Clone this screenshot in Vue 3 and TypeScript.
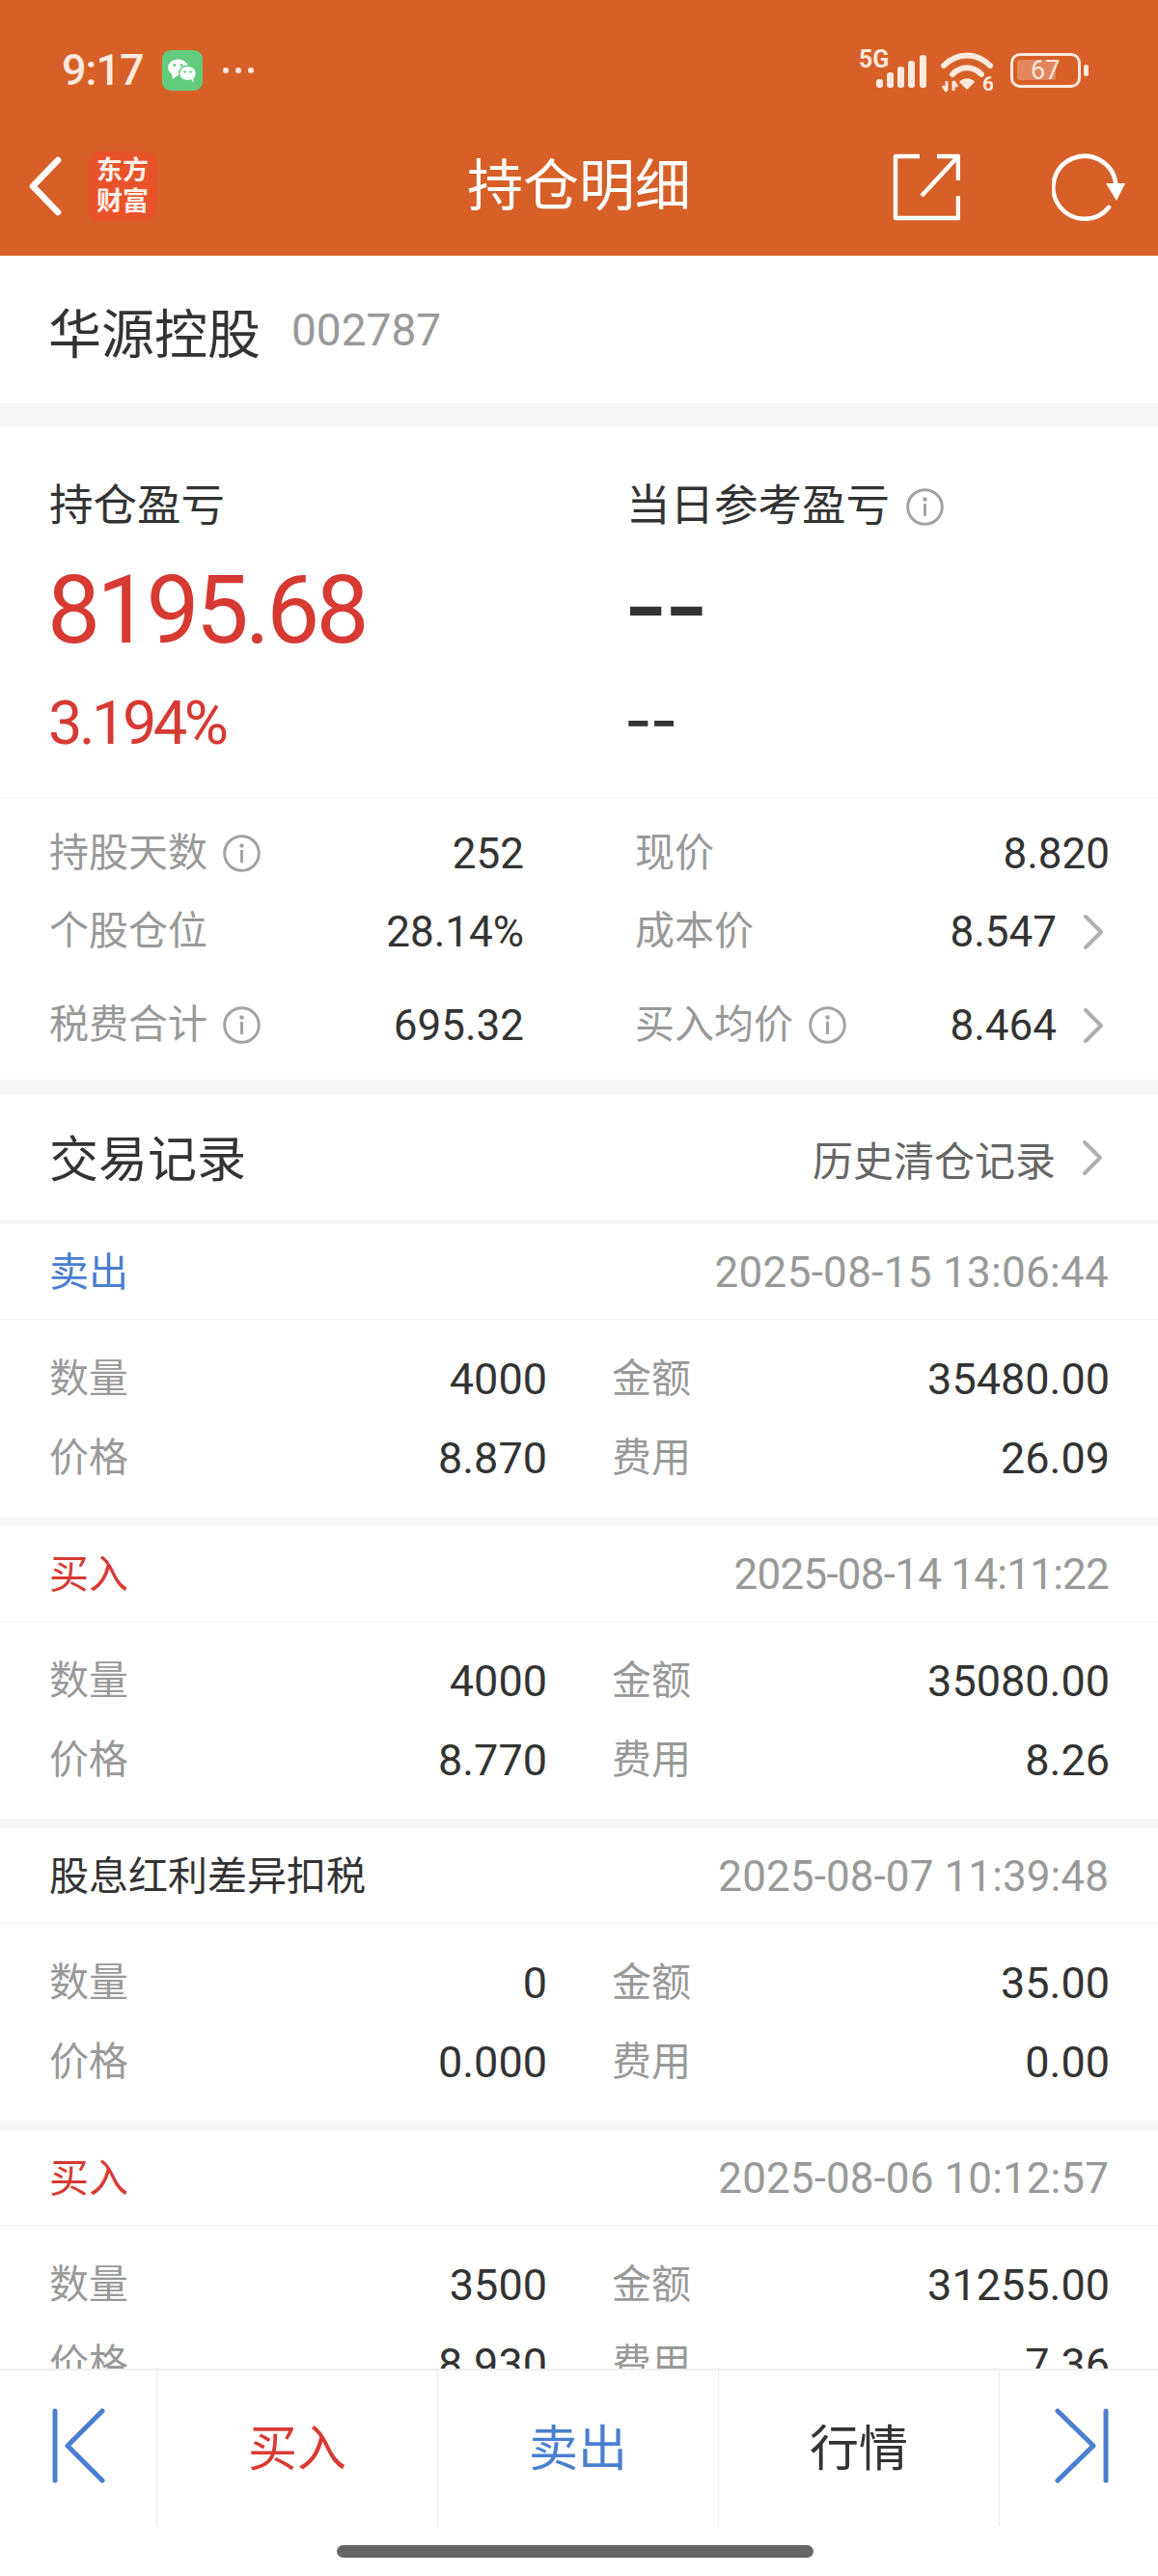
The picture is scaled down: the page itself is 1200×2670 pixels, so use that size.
<script setup lang="ts">
interface TradeRecord {
  type: string
  tone: string
  time: string
  spacing: number
  qty: string
  amount: string
  price: string
  fee: string
}

const records: TradeRecord[] = [
  { type: '卖出', tone: 'blue', time: '2025-08-15 13:06:44', spacing: 0.3, qty: '4000', amount: '35480.00', price: '8.870', fee: '26.09' },
  { type: '买入', tone: 'red', time: '2025-08-14 14:11:22', spacing: -0.75, qty: '4000', amount: '35080.00', price: '8.770', fee: '8.26' },
  { type: '股息红利差异扣税', tone: 'dark', time: '2025-08-07 11:39:48', spacing: 0.1, qty: '0', amount: '35.00', price: '0.000', fee: '0.00' },
  { type: '买入', tone: 'red', time: '2025-08-06 10:12:57', spacing: 0.1, qty: '3500', amount: '31255.00', price: '8.930', fee: '7.36' },
]
</script>

<template>
  <div class="page">
    <header class="header">
      <div class="status">
        <div class="status-left">
          <span class="clock">9:17</span>
          <svg class="wechat" width="42" height="42" viewBox="0 0 42 42">
            <rect width="42" height="42" rx="9" fill="#62cc7c" />
            <ellipse cx="16.5" cy="18" rx="10.5" ry="8.5" fill="#fff" />
            <path d="M10 24l1 6 5-4z" fill="#fff" />
            <ellipse cx="26.5" cy="24" rx="9" ry="7.8" fill="#fff" stroke="#62cc7c" stroke-width="1.5" />
            <path d="M30 30l3 4-.5-5z" fill="#fff" />
            <circle cx="13" cy="15.5" r="1.5" fill="#62cc7c" />
            <circle cx="20" cy="15.5" r="1.5" fill="#62cc7c" />
            <circle cx="23.5" cy="22.5" r="1.3" fill="#62cc7c" />
            <circle cx="29.5" cy="22.5" r="1.3" fill="#62cc7c" />
          </svg>
          <span class="dots"><i></i><i></i><i></i></span>
        </div>
        <div class="status-right">
          <span class="net">5G</span>
          <svg class="signal" width="52" height="34" viewBox="0 0 52 34">
            <rect x="0" y="25" width="7" height="9" rx="3" fill="#fde9dd" />
            <rect x="11" y="18" width="7" height="16" rx="3" fill="#fde9dd" />
            <rect x="22" y="12" width="7" height="22" rx="3" fill="#fde9dd" />
            <rect x="33" y="6" width="7" height="28" rx="3" fill="#fde9dd" />
            <rect x="45" y="0" width="7" height="34" rx="3" fill="#fde9dd" />
          </svg>
          <svg class="wifi" width="54" height="42" viewBox="0 0 54 42">
            <path d="M3 14C17 0 37 0 51 14" fill="none" stroke="#fde9dd" stroke-width="6" stroke-linecap="round" />
            <path d="M12 23C21 14 33 14 42 23" fill="none" stroke="#fde9dd" stroke-width="6" stroke-linecap="round" />
            <path d="M19 31C23 26 31 26 35 31L27 39Z" fill="#fde9dd" />
            <path d="M6 30v10M2 35l4 6M13 40V30M13 30l4 6" fill="none" stroke="#fde9dd" stroke-width="3" />
            <text x="43" y="40" class="wifi-six">6</text>
          </svg>
          <span class="battery"><span class="battery-fill"></span><span class="battery-num">67</span></span>
          <span class="battery-nub"></span>
        </div>
      </div>
      <div class="nav">
        <div class="nav-left">
          <svg class="back" width="36" height="62" viewBox="0 0 36 62">
            <path d="M30 4L4 31l26 27" fill="none" stroke="#fff" stroke-width="6.5" stroke-linecap="round" stroke-linejoin="round" />
          </svg>
          <div class="logo"><span>东方</span><span>财富</span></div>
        </div>
        <h1 class="nav-title">持仓明细</h1>
        <div class="nav-right">
          <svg width="70" height="70" viewBox="0 0 70 70">
            <path d="M28 3H3v64h65V44M68 28V3H46M68 3L30 44" fill="none" stroke="#fff" stroke-width="4.5" stroke-linejoin="round" />
          </svg>
          <svg width="76" height="70" viewBox="0 0 76 70">
            <path d="M59 56A32.5 32.5 0 1 1 66 30" fill="none" stroke="#fff" stroke-width="4.5" stroke-linecap="round" />
            <path d="M56 31H76L67 49Z" fill="#fff" />
          </svg>
        </div>
      </div>
    </header>

    <main class="scroller">
      <section class="name-row">
        <span class="stock-name">华源控股</span>
        <span class="stock-code">002787</span>
      </section>

      <section class="summary">
        <div class="summary-col">
          <div class="summary-title">持仓盈亏</div>
          <div class="big red">8195.68</div>
          <div class="pct red">3.194%</div>
        </div>
        <div class="summary-col">
          <div class="summary-title">当日参考盈亏
            <svg class="info" width="39" height="39" viewBox="0 0 39 39">
              <circle cx="19.5" cy="19.5" r="17.8" fill="none" stroke="#a3a3a3" stroke-width="3" />
              <circle cx="19.5" cy="11.5" r="2.2" fill="#a3a3a3" />
              <rect x="18" y="16" width="3" height="13" fill="#a3a3a3" />
            </svg>
          </div>
          <div class="big dash">--</div>
          <div class="pct dash-small">--</div>
        </div>
      </section>

      <section class="stats">
        <div class="stat-row first">
          <div class="stat">
            <span class="stat-label">持股天数
              <svg class="info" width="39" height="39" viewBox="0 0 39 39">
                <circle cx="19.5" cy="19.5" r="17.8" fill="none" stroke="#a3a3a3" stroke-width="3" />
                <circle cx="19.5" cy="11.5" r="2.2" fill="#a3a3a3" />
                <rect x="18" y="16" width="3" height="13" fill="#a3a3a3" />
              </svg>
            </span>
            <span class="stat-value">252</span>
          </div>
          <div class="stat">
            <span class="stat-label">现价</span>
            <span class="stat-value">8.820</span>
          </div>
        </div>
        <div class="stat-row second">
          <div class="stat">
            <span class="stat-label">个股仓位</span>
            <span class="stat-value">28.14%</span>
          </div>
          <div class="stat">
            <span class="stat-label">成本价</span>
            <span class="stat-value">8.547
              <svg class="chev" width="27" height="36" viewBox="0 0 27 36">
                <path d="M2 2l16 16L2 34" fill="none" stroke="#b0b0b0" stroke-width="4" stroke-linecap="round" stroke-linejoin="round" />
              </svg>
            </span>
          </div>
        </div>
        <div class="stat-row third">
          <div class="stat">
            <span class="stat-label">税费合计
              <svg class="info" width="39" height="39" viewBox="0 0 39 39">
                <circle cx="19.5" cy="19.5" r="17.8" fill="none" stroke="#a3a3a3" stroke-width="3" />
                <circle cx="19.5" cy="11.5" r="2.2" fill="#a3a3a3" />
                <rect x="18" y="16" width="3" height="13" fill="#a3a3a3" />
              </svg>
            </span>
            <span class="stat-value">695.32</span>
          </div>
          <div class="stat">
            <span class="stat-label">买入均价
              <svg class="info" width="39" height="39" viewBox="0 0 39 39">
                <circle cx="19.5" cy="19.5" r="17.8" fill="none" stroke="#a3a3a3" stroke-width="3" />
                <circle cx="19.5" cy="11.5" r="2.2" fill="#a3a3a3" />
                <rect x="18" y="16" width="3" height="13" fill="#a3a3a3" />
              </svg>
            </span>
            <span class="stat-value">8.464
              <svg class="chev" width="27" height="36" viewBox="0 0 27 36">
                <path d="M2 2l16 16L2 34" fill="none" stroke="#b0b0b0" stroke-width="4" stroke-linecap="round" stroke-linejoin="round" />
              </svg>
            </span>
          </div>
        </div>
      </section>

      <section class="trades-head">
        <span class="trades-title">交易记录</span>
        <span class="trades-link">历史清仓记录
          <svg class="chev" width="27" height="36" viewBox="0 0 27 36">
            <path d="M2 2l16 16L2 34" fill="none" stroke="#b0b0b0" stroke-width="4" stroke-linecap="round" stroke-linejoin="round" />
          </svg>
        </span>
      </section>

      <article v-for="r in records" :key="r.time" class="record">
        <div class="record-head">
          <span class="record-type" :class="r.tone">{{ r.type }}</span>
          <span class="record-time" :style="{ letterSpacing: r.spacing + 'px' }">{{ r.time }}</span>
        </div>
        <div class="record-body">
          <div class="cell"><span class="cell-label">数量</span><span class="cell-value">{{ r.qty }}</span></div>
          <div class="cell"><span class="cell-label">金额</span><span class="cell-value">{{ r.amount }}</span></div>
          <div class="cell"><span class="cell-label">价格</span><span class="cell-value">{{ r.price }}</span></div>
          <div class="cell"><span class="cell-label">费用</span><span class="cell-value">{{ r.fee }}</span></div>
        </div>
      </article>
    </main>

    <nav class="bottom">
      <div class="bottom-icon">
        <svg width="56" height="78" viewBox="0 0 56 78">
          <path d="M3 3v72M52 3L16 39l36 36" fill="none" stroke="#4a7fd0" stroke-width="5" stroke-linecap="round" stroke-linejoin="round" />
        </svg>
      </div>
      <div class="bottom-btn red">买入</div>
      <div class="bottom-btn blue">卖出</div>
      <div class="bottom-btn dark">行情</div>
      <div class="bottom-icon last">
        <svg width="56" height="78" viewBox="0 0 56 78">
          <path d="M53 3v72M3 3l37 36L3 75" fill="none" stroke="#4a7fd0" stroke-width="5" stroke-linecap="round" stroke-linejoin="round" />
        </svg>
      </div>
    </nav>
    <div class="home-area"><span class="home-bar"></span></div>
  </div>
</template>

<style scoped>
.page {
  width: 1200px;
  height: 2670px;
  display: flex;
  flex-direction: column;
  overflow: hidden;
  background: #fff;
  color: #333;
  font-family: Roboto, "Noto Sans CJK SC", sans-serif;
}

.header {
  height: 265px;
  flex: none;
  background: #d66028;
  color: #fff;
}
.status {
  height: 112px;
  padding: 52px 72px 0 64px;
  box-sizing: border-box;
  display: flex;
  justify-content: space-between;
}
.status-left {
  height: 42px;
  display: flex;
  align-items: center;
}
.clock {
  font-size: 45px;
  line-height: 42px;
  font-weight: 500;
  width: 104px;
  color: #fde9dd;
  letter-spacing: -1px;
}
.dots {
  display: flex;
  gap: 7px;
  margin-left: 21px;
}
.dots i {
  width: 6px;
  height: 6px;
  border-radius: 50%;
  background: #fde9dd;
}
.status-right {
  position: relative;
  height: 44px;
  display: flex;
  align-items: flex-start;
}
.net {
  font-size: 25px;
  line-height: 20px;
  font-weight: 700;
  color: #fde9dd;
  width: 18px;
  white-space: nowrap;
}
.signal {
  margin-top: 5px;
}
.wifi {
  margin-left: 15px;
  margin-top: 2px;
}
.wifi-six {
  font-size: 21px;
  font-weight: 700;
  fill: #fde9dd;
}
.battery {
  position: relative;
  width: 73px;
  height: 36px;
  margin: 3px 0 0 18px;
  box-sizing: border-box;
  border: 3px solid #fde9dd;
  border-radius: 10px;
}
.battery-fill {
  position: absolute;
  left: 4px;
  top: 4px;
  width: 40px;
  height: 21px;
  border-radius: 3px;
  background: #e5855b;
}
.battery-num {
  position: absolute;
  left: 18px;
  top: 1px;
  font-size: 27px;
  line-height: 28px;
  color: #fde9dd;
}
.battery-nub {
  width: 5px;
  height: 12px;
  margin: 15px 0 0 3px;
  border-radius: 3px;
  background: #fde9dd;
}
.nav {
  position: relative;
  height: 153px;
  padding: 0 34px 0 30px;
  display: flex;
  justify-content: space-between;
}
.nav-left {
  display: flex;
  align-items: flex-start;
}
.back {
  margin-top: 50px;
  flex: none;
}
.logo {
  width: 72px;
  height: 72px;
  margin: 45px 0 0 25px;
  border-radius: 12px;
  background: #e8532b;
  display: flex;
  flex-direction: column;
  align-items: center;
  justify-content: center;
  font-size: 27px;
  line-height: 32px;
  font-weight: 700;
  color: #fff1e9;
}
.nav-title {
  position: absolute;
  left: 0;
  right: 0;
  top: 43px;
  margin: 0;
  text-align: center;
  font-size: 58px;
  line-height: 76px;
  font-weight: 400;
}
.nav-right {
  display: flex;
  align-items: flex-start;
  gap: 95px;
  padding-top: 47px;
}

.scroller {
  flex: 1;
  min-height: 0;
  overflow: hidden;
  background: #f6f7f9;
}
.name-row {
  height: 153px;
  padding-left: 50px;
  display: flex;
  align-items: center;
  background: #fff;
  margin-bottom: 25px;
}
.stock-name {
  font-size: 55px;
  color: #333;
}
.stock-code {
  margin-left: 32px;
  font-size: 46px;
  color: #999;
}

.summary {
  height: 384px;
  box-sizing: border-box;
  padding: 60px 0 0 51px;
  display: grid;
  grid-template-columns: 598px 1fr;
  background: #fff;
  border-bottom: 1px solid #f3f3f3;
}
.summary-title {
  display: flex;
  align-items: center;
  font-size: 45.5px;
  line-height: 44px;
  color: #333;
}
.summary-title .info {
  margin-left: 17px;
}
.big {
  margin-top: 36px;
  font-size: 98px;
  line-height: 100px;
  letter-spacing: -3.8px;
  margin-left: -2px;
}
.pct {
  margin-top: 37px;
  font-size: 63px;
  line-height: 60px;
  letter-spacing: -3.5px;
  margin-left: -1px;
}
.red {
  color: #d63a33;
}
.blue {
  color: #4a7fd0;
}
.dark {
  color: #333;
}
.big.dash {
  font-family: Inter, sans-serif;
  font-size: 100px;
  line-height: 90px;
  letter-spacing: -4px;
  color: #333;
  font-weight: 500;
  margin-left: -3px;
  margin-bottom: 10px;
}
.pct.dash-small {
  font-family: Inter, sans-serif;
  font-size: 62px;
  line-height: 50px;
  letter-spacing: -2px;
  color: #333;
  font-weight: 500;
  margin-top: 49px;
  margin-left: -2px;
}

.stats {
  height: 292px;
  box-sizing: border-box;
  padding: 33px 50px 0 51px;
  background: #fff;
  margin-bottom: 16px;
}
.stat-row {
  display: grid;
  grid-template-columns: 492px 492px;
  grid-template-rows: 48px;
  gap: 115px;
  height: 48px;
}
.second {
  margin-top: 33px;
}
.third {
  margin-top: 49px;
}
.stat {
  display: flex;
  justify-content: space-between;
  align-items: center;
}
.stat-label {
  display: flex;
  align-items: center;
  font-size: 41px;
  line-height: 48px;
  color: #999;
}
.stat-label .info {
  margin-left: 16px;
}
.stat-value {
  display: flex;
  align-items: center;
  padding-top: 2px;
  font-size: 44px;
  line-height: 46px;
  color: #333;
}
.chev {
  margin-left: 28px;
  flex: none;
}

.trades-head {
  height: 130px;
  box-sizing: border-box;
  padding: 0 51px;
  display: flex;
  justify-content: space-between;
  align-items: center;
  background: #fff;
  margin-bottom: 4px;
}
.trades-title {
  font-size: 51px;
  line-height: 60px;
  margin-top: 6px;
  color: #333;
}
.trades-link {
  display: flex;
  align-items: center;
  font-size: 42px;
  color: #666;
}

.record {
  height: 303px;
  margin-bottom: 10px;
  background: #fff;
}
.record-head {
  height: 99px;
  box-sizing: border-box;
  padding: 0 51px;
  display: flex;
  justify-content: space-between;
  align-items: center;
  border-bottom: 1px solid #f3f3f3;
}
.record-type {
  font-size: 41px;
  line-height: 50px;
  padding-top: 2px;
}
.record-time {
  font-size: 44px;
  line-height: 50px;
  padding-top: 2px;
  color: #999;
}
.record-body {
  padding: 37px 50px 0 51px;
  display: grid;
  grid-template-columns: 516px 516px;
  grid-auto-rows: 48px;
  row-gap: 34px;
  column-gap: 67px;
}
.cell {
  display: flex;
  justify-content: space-between;
  align-items: center;
}
.cell-label {
  font-size: 41px;
  line-height: 48px;
  color: #999;
}
.cell-value {
  font-size: 45px;
  line-height: 46px;
  padding-top: 2px;
  color: #333;
}

.bottom {
  flex: none;
  height: 163px;
  box-sizing: border-box;
  display: flex;
  background: #fff;
  border-top: 2px solid #eeeeee;
}
.bottom-icon {
  width: 163px;
  box-sizing: border-box;
  padding: 39px 0 0 54px;
  border-right: 1px solid #eeeeee;
}
.bottom-icon.last {
  flex: 1;
  padding-left: 57px;
  border-right: 0;
}
.bottom-btn {
  width: 291px;
  box-sizing: border-box;
  padding-bottom: 8px;
  border-right: 1px solid #eeeeee;
  display: flex;
  align-items: center;
  justify-content: center;
  font-size: 51px;
}
.home-area {
  flex: none;
  height: 52px;
  display: flex;
  justify-content: center;
  padding-top: 20px;
  box-sizing: border-box;
  background: #fff;
}
.home-bar {
  width: 494px;
  height: 13px;
  border-radius: 7px;
  background: #666;
  transform: translateX(-4px);
}
</style>
